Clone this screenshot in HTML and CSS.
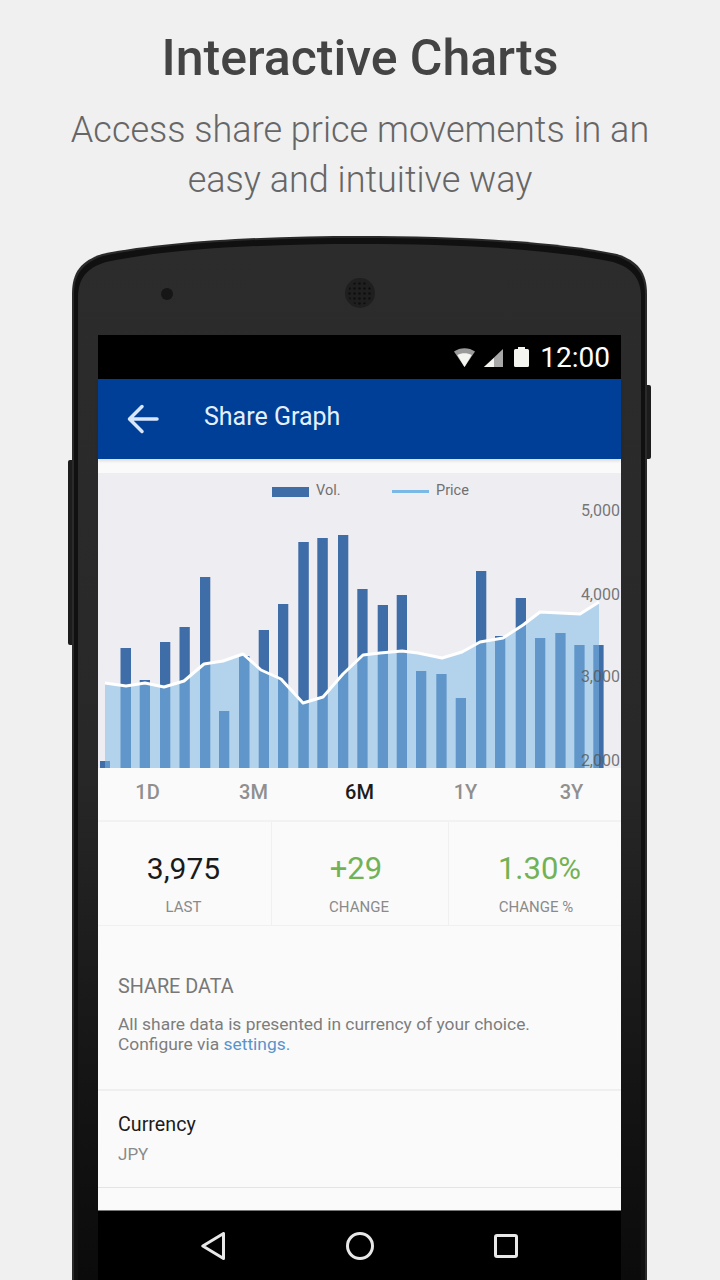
FILE: index.html
```html
<!DOCTYPE html>
<html lang="en">
<head>
    <meta charset="UTF-8">
    <meta name="viewport" content="width=device-width, initial-scale=1.0">
    <title>Interactive Charts</title>
    <link rel="stylesheet" href="styles.css">
</head>
<body>
    <header class="intro">
        <h1>Interactive Charts</h1>
        <p>Access share price movements in an<br>easy and intuitive way</p>
    </header>

    <div class="phone">
        <!-- phone body sits behind the screen -->
        <svg class="shell" viewBox="0 0 575 1044" width="575" height="1044">
            <defs>
                <linearGradient id="bezel" x1="0" y1="0" x2="0" y2="1">
                    <stop offset="0" stop-color="#2c2c2c"/>
                    <stop offset="0.5" stop-color="#282828"/>
                    <stop offset="0.8" stop-color="#151515"/>
                    <stop offset="1" stop-color="#0b0b0b"/>
                </linearGradient>
                <pattern id="mesh" width="5" height="5" patternUnits="userSpaceOnUse">
                    <circle cx="2.5" cy="2.5" r="1.3" fill="#0e0e0e"/>
                </pattern>
            </defs>
            <path class="shell-edge" d="M0 1044V58C0 36 9 25 30 18C100 4 200 0 288 0C376 0 475 4 545 18C566 25 575 36 575 58V1044Z"/>
            <path class="shell-rim" d="M2 1044V58C2 38 11 27 31 20C100 6 200 2 288 2C376 2 475 6 544 20C564 27 573 38 573 58V1044Z"/>
            <path fill="url(#bezel)" d="M6 1044V62C6 42 15 32 34 26C100 12 200 8 288 8C376 8 475 12 541 26C560 32 569 42 569 62V1044Z"/>
            <circle class="camera" cx="95" cy="58" r="6"/>
            <circle class="speaker" cx="288" cy="57" r="15"/>
            <circle fill="url(#mesh)" cx="288" cy="57" r="12"/>
        </svg>
        <span class="side-key side-key-left"></span>
        <span class="side-key side-key-right"></span>

        <div class="screen">
            <div class="status-bar">
                <svg class="status-icons" viewBox="0 0 76 20" width="76" height="20">
                    <path class="wifi-dim" d="M0 4.500C6 0 15 0 21 4.500L10.500 20Z"/>
                    <path class="wifi-on" d="M3.300 8C7.500 5.500 13.500 5.500 17.700 8L10.500 20Z"/>
                    <path class="signal-dim" d="M49 2V20H30Z"/>
                    <path class="wifi-on" d="M40 11V20H30Z"/>
                    <path class="wifi-on" d="M60 3.500Q60 2 61.500 2H64V0H71V2H73.500Q75 2 75 3.500V18.500Q75 20 73.500 20H61.500Q60 20 60 18.500Z"/>
                </svg>
                <span class="clock">12:00</span>
            </div>

            <div class="app-bar">
                <svg class="back" viewBox="0 0 32 30" width="32" height="30">
                    <path d="M30 15H4M15 2.500L2.500 15L15 27.500"/>
                </svg>
                <span class="app-title">Share Graph</span>
            </div>

            <div class="content">
                <svg class="chart" viewBox="98 473 523 295" width="523" height="295">
                    <rect class="vol" x="272" y="487" width="37" height="10"/>
                    <text class="legend-text" x="316" y="495">Vol.</text>
                    <rect class="price-key" x="392" y="490" width="37" height="3"/>
                    <text class="legend-text" x="436" y="495">Price</text>

                    <rect class="vol" x="100" y="761" width="10" height="7"/>
                    <rect class="vol" x="120.500" y="648" width="10.500" height="120"/>
                    <rect class="vol" x="139.700" y="680" width="10.300" height="88"/>
                    <rect class="vol" x="160" y="642" width="10.300" height="126"/>
                    <rect class="vol" x="179.500" y="627" width="10.300" height="141"/>
                    <rect class="vol" x="200" y="577" width="10.300" height="191"/>
                    <rect class="vol" x="219" y="711" width="10.300" height="57"/>
                    <rect class="vol" x="239" y="656" width="10.500" height="112"/>
                    <rect class="vol" x="258.700" y="630" width="10.300" height="138"/>
                    <rect class="vol" x="278" y="604" width="10.300" height="164"/>
                    <rect class="vol" x="298.300" y="542" width="10.500" height="226"/>
                    <rect class="vol" x="317.300" y="538" width="10.500" height="230"/>
                    <rect class="vol" x="338" y="535" width="10.300" height="233"/>
                    <rect class="vol" x="357.300" y="589" width="10.300" height="179"/>
                    <rect class="vol" x="377.700" y="605" width="10.300" height="163"/>
                    <rect class="vol" x="396.700" y="595" width="10.300" height="173"/>
                    <rect class="vol" x="416" y="671" width="10.300" height="97"/>
                    <rect class="vol" x="436.300" y="674" width="10.300" height="94"/>
                    <rect class="vol" x="455.700" y="698" width="10.300" height="70"/>
                    <rect class="vol" x="476" y="571" width="10.300" height="197"/>
                    <rect class="vol" x="495" y="636" width="10.300" height="132"/>
                    <rect class="vol" x="515.700" y="598" width="10.300" height="170"/>
                    <rect class="vol" x="535" y="638" width="10.300" height="130"/>
                    <rect class="vol" x="555.300" y="633" width="10.300" height="135"/>
                    <rect class="vol" x="574.300" y="645" width="10.300" height="123"/>
                    <rect class="vol" x="593.300" y="645" width="10.300" height="123"/>

                    <polygon class="price-area" points="105,683 126,686 145,683 164,687 184,681 204,664 223,661 243,654 261,670 281,679 303,703 323,697 343,674 363,655 380,653 402,651 418,653 442,658 462,652 480,642 503,638 523,625 540,612 580,614 599,602 599,768 105,768"/>
                    <polyline class="price-line" points="105,683 126,686 145,683 164,687 184,681 204,664 223,661 243,654 261,670 281,679 303,703 323,697 343,674 363,655 380,653 402,651 418,653 442,658 462,652 480,642 503,638 523,625 540,612 580,614 599,602"/>

                    <text class="axis-text" x="620" y="516">5,000</text>
                    <text class="axis-text" x="620" y="600">4,000</text>
                    <text class="axis-text" x="620" y="682">3,000</text>
                    <text class="axis-text" x="620" y="766">2,000</text>
                </svg>

                <div class="ranges">
                    <span>1D</span>
                    <span>3M</span>
                    <span class="range-on">6M</span>
                    <span>1Y</span>
                    <span>3Y</span>
                </div>

                <div class="stats">
                    <div class="stat">
                        <div class="stat-value">3,975</div>
                        <div class="stat-label">LAST</div>
                    </div>
                    <div class="stat">
                        <div class="stat-value up">+29</div>
                        <div class="stat-label">CHANGE</div>
                    </div>
                    <div class="stat">
                        <div class="stat-value up">1.30%</div>
                        <div class="stat-label">CHANGE %</div>
                    </div>
                </div>

                <div class="share-data">
                    <h2>SHARE DATA</h2>
                    <p>All share data is presented in currency of your choice.<br>Configure via <a href="#">settings.</a></p>
                </div>

                <div class="setting">
                    <div class="setting-name">Currency</div>
                    <div class="setting-value">JPY</div>
                </div>
            </div>

            <div class="nav-bar">
                <svg viewBox="0 0 24 28" width="24" height="28">
                    <path d="M22.500 1.500V26.500L1.800 14Z"/>
                </svg>
                <svg viewBox="0 0 28 28" width="28" height="28">
                    <circle cx="14" cy="14" r="12.500"/>
                </svg>
                <svg viewBox="0 0 24 24" width="24" height="24">
                    <rect x="1.500" y="1.500" width="21" height="21" rx="1.500"/>
                </svg>
            </div>
        </div>
    </div>
</body>
</html>
```

FILE: styles.css
```css
html, body {
    margin: 0;
    height: 1280px;
    overflow: hidden;
}
body {
    background-color: #f0f0f0;
    font-family: Roboto, sans-serif;
}

.intro {
    height: 236px;
    padding-top: 29px;
    box-sizing: border-box;
    text-align: center;
}
.intro h1 {
    margin: 0;
    font-size: 50px;
    line-height: 58px;
    font-weight: 500;
    color: #444;
}
.intro p {
    margin: 18px 0 0;
    font-size: 36px;
    line-height: 50px;
    font-weight: 300;
    color: #666;
}

.phone {
    position: relative;
    width: 575px;
    height: 1044px;
    margin-left: 72px;
}
.shell {
    position: absolute;
    left: 0;
    top: 0;
}
.shell-edge { fill: #2a2a2a; }
.shell-rim { fill: #101010; }
.camera { fill: #161616; }
.speaker { fill: #1f1f1f; }
.side-key {
    position: absolute;
    width: 4px;
    background-color: #1c1c1c;
}
.side-key-left {
    left: -4px;
    top: 224px;
    height: 185px;
    border-radius: 2px 0 0 2px;
}
.side-key-right {
    right: -4px;
    top: 149px;
    height: 74px;
    border-radius: 0 2px 2px 0;
}

.screen {
    position: relative;
    width: 523px;
    margin-left: 26px;
    padding-top: 99px;
}

.status-bar {
    display: flex;
    justify-content: flex-end;
    align-items: center;
    height: 44px;
    padding-right: 11px;
    background-color: #000;
}
.status-icons {
    margin-right: 10px;
}
.wifi-dim { fill: #9a9a9a; }
.wifi-on { fill: #f4f4f0; }
.signal-dim { fill: #a8a8a8; }
.clock {
    padding-top: 2px;
    font-size: 28px;
    line-height: 44px;
    color: #fff;
}

.app-bar {
    display: flex;
    align-items: center;
    height: 80px;
    background-color: #003f98;
    box-shadow: 0 2px 3px rgba(0, 0, 0, 0.12);
    position: relative;
}
.back {
    margin-left: 29px;
}
.back path {
    fill: none;
    stroke: #d8e6fb;
    stroke-width: 3.500;
    stroke-linecap: round;
    stroke-linejoin: round;
}
.app-title {
    margin-left: 45px;
    padding-bottom: 6px;
    font-size: 25px;
    color: #e4f0ff;
}

.content {
    height: 751px;
    padding-top: 14px;
    box-sizing: border-box;
    background-color: #fafafa;
}

.chart {
    display: block;
    overflow: visible;
    background-color: #eeedf2;
}
.vol { fill: #3f6da8; }
.price-key { fill: #7ab8e6; }
.price-area { fill: rgb(126, 188, 230); fill-opacity: 0.525; }
.price-line {
    fill: none;
    stroke: #fff;
    stroke-width: 3;
    stroke-linejoin: round;
}
.legend-text {
    font-size: 14.500px;
    fill: #707070;
}
.axis-text {
    font-size: 16px;
    text-anchor: end;
    fill: #555;
    fill-opacity: 0.8;
}

.ranges {
    display: grid;
    grid-template-columns: repeat(5, 106px);
    justify-content: center;
    height: 52px;
    border-bottom: 2px solid #f2f2f2;
    line-height: 48px;
    text-align: center;
    font-size: 20px;
    font-weight: 500;
    color: #8f8f8f;
}
.range-on {
    color: #1c1c1c;
}

.stats {
    display: grid;
    grid-template-columns: 173px 177px 173px;
    height: 103px;
    border-bottom: 1px solid #f0f0f0;
    text-align: center;
}
.stat {
    padding-right: 2px;
}
.stat + .stat {
    border-left: 1px solid #f0f0f0;
}
.stat:last-child {
    padding: 0 0 0 2px;
}
.stat-value {
    margin-top: 27px;
    font-size: 30px;
    line-height: 40px;
    color: #1a1a1a;
}
.stat-value.up {
    font-size: 31px;
    color: #72b255;
}
.stat:nth-child(2) .stat-value {
    padding-right: 6px;
}
.stat:nth-child(3) .stat-value {
    padding-left: 7px;
}
.stat-label {
    margin-top: 8px;
    font-size: 15px;
    line-height: 20px;
    color: #8a8a8a;
}

.share-data {
    height: 165px;
    padding: 50px 20px 0;
    box-sizing: border-box;
    border-bottom: 2px solid #efefef;
}
.share-data h2 {
    margin: 0;
    font-size: 19.800px;
    line-height: 22px;
    font-weight: 400;
    color: #777;
}
.share-data p {
    margin: 16px 0 0;
    font-size: 17.400px;
    line-height: 20px;
    color: #7d7d7d;
}
.share-data a {
    color: #5a93cc;
    text-decoration: none;
}

.setting {
    height: 97px;
    padding: 22px 20px 0;
    box-sizing: border-box;
    border-bottom: 1px solid #e4e4e4;
}
.setting-name {
    font-size: 19.700px;
    line-height: 24px;
    color: #1c1c1c;
}
.setting-value {
    margin-top: 7px;
    font-size: 17px;
    line-height: 20px;
    color: #8a8a8a;
}

.nav-bar {
    display: grid;
    grid-template-columns: 24px 28px 24px;
    justify-content: space-between;
    align-items: center;
    height: 70px;
    padding: 0 103px 2px;
    border-top: 1px solid #777;
    background-color: #000;
}
.nav-bar svg {
    display: block;
    fill: none;
    stroke: #e8e8e8;
    stroke-width: 3;
    stroke-linejoin: round;
}
```
